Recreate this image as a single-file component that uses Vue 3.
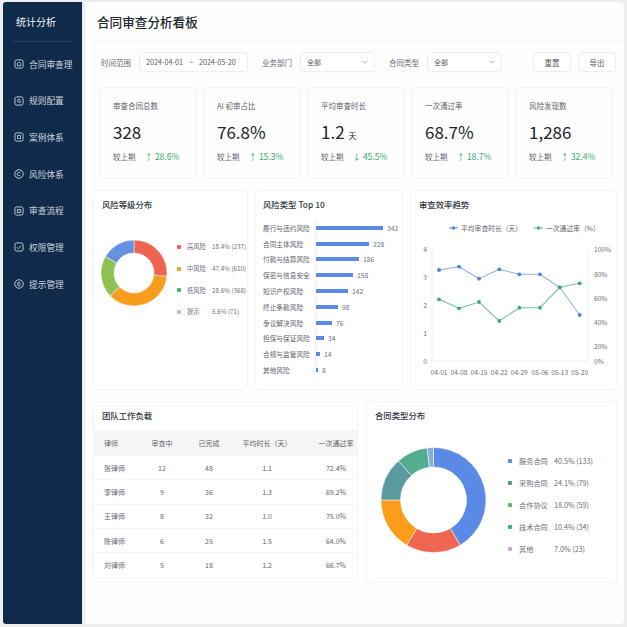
<template>
  <div class="page">
    <aside class="sidebar">
      <div class="brand">统计分析</div>
      <nav class="nav">
        <div v-for="item in navItems" :key="item.label" class="nav-item">
          <svg class="nav-icon" viewBox="0 0 11 11" fill="none" stroke="currentColor" stroke-width="1">
            <circle v-if="item.round" cx="5.5" cy="5.5" r="4.7" />
            <rect v-else x="1" y="1" width="9" height="9" rx="2" />
            <path :d="item.glyph" stroke-width="0.9" />
          </svg>
          <span>{{ item.label }}</span>
        </div>
      </nav>
    </aside>

    <main class="main">
      <h1 class="title">合同审查分析看板</h1>

      <section class="panel">
        <div class="filters">
          <span class="filter-label">时间范围</span>
          <div class="box date-box"><span>2024-04-01</span><span>~</span><span>2024-05-20</span></div>
          <span class="filter-label">业务部门</span>
          <div class="box select-box">
            <span>全部</span>
            <svg class="chevron" viewBox="0 0 8 5" fill="none" stroke="#8a8f98" stroke-width="0.9"><path d="M1 1l3 3 3-3" /></svg>
          </div>
          <span class="filter-label">合同类型</span>
          <div class="box select-box">
            <span>全部</span>
            <svg class="chevron" viewBox="0 0 8 5" fill="none" stroke="#8a8f98" stroke-width="0.9"><path d="M1 1l3 3 3-3" /></svg>
          </div>
          <button class="box btn btn-first">重置</button>
          <button class="box btn">导出</button>
        </div>

        <div class="kpis">
          <div v-for="kpi in kpis" :key="kpi.label" class="kpi">
            <div class="kpi-label">{{ kpi.label }}</div>
            <div class="kpi-value">{{ kpi.value }}<small v-if="kpi.unit">{{ kpi.unit }}</small></div>
            <div class="kpi-foot">
              <span>较上期</span>
              <span class="kpi-trend">{{ kpi.arrow }} {{ kpi.trend }}</span>
            </div>
          </div>
        </div>
      </section>

      <section class="charts">
        <div class="card risk-card">
          <h2 class="card-title">风险等级分布</h2>
          <div class="risk-body">
            <svg class="donut-small" viewBox="0 0 68 68">
              <path v-for="s in riskSlices" :key="s.color" :d="s.d" :fill="s.color" stroke="#fff" stroke-width="0.5" />
            </svg>
            <ul class="legend risk-legend">
              <li v-for="l in riskLegend" :key="l.name">
                <i class="dot" :style="{ background: l.color }"></i>
                <span class="legend-name">{{ l.name }}</span>
                <span class="legend-val">{{ l.val }}</span>
              </li>
            </ul>
          </div>
        </div>

        <div class="card bars-card">
          <h2 class="card-title">风险类型 Top 10</h2>
          <div class="bars">
            <div v-for="b in bars" :key="b.name" class="bar-row">
              <span class="bar-name">{{ b.name }}</span>
              <div class="bar-track">
                <i class="bar" :style="{ width: b.w + 'px' }"></i>
                <span class="bar-num">{{ b.num }}</span>
              </div>
            </div>
          </div>
        </div>

        <div class="card trend-card">
          <h2 class="card-title">审查效率趋势</h2>
          <svg class="trend" viewBox="0 0 207 170" width="207" height="170">
            <g class="legend-svg">
              <path d="M39 16h9" stroke="#5b8ae6" stroke-width="1.2" />
              <circle cx="43.5" cy="16" r="1.8" fill="#5b8ae6" />
              <text x="51" y="18.5">平均审查时长（天）</text>
              <path d="M124 16h9" stroke="#48ad80" stroke-width="1.2" />
              <circle cx="128.5" cy="16" r="1.8" fill="#48ad80" />
              <text x="136" y="18.5">一次通过率（%）</text>
            </g>
            <path d="M22 37V149H178V37" fill="none" stroke="#eceef1" stroke-width="0.8" />
            <g class="axis-text">
              <text v-for="t in leftTicks" :key="t.label" x="17" :y="t.y + 2.5" text-anchor="end">{{ t.label }}</text>
              <text v-for="t in rightTicks" :key="t.label" x="184" :y="t.y + 2.5">{{ t.label }}</text>
              <text v-for="(d, i) in dates" :key="d" :x="xs[i]" y="162.5" text-anchor="middle">{{ d }}</text>
            </g>
            <polyline :points="line(durations)" fill="none" stroke="#8fb0ec" stroke-width="1.1" />
            <polyline :points="line(passRates)" fill="none" stroke="#7cc4a4" stroke-width="1.1" />
            <circle v-for="(y, i) in durations" :key="'d' + i" :cx="xs[i]" :cy="y" r="1.9" fill="#4f7fe0" />
            <circle v-for="(y, i) in passRates" :key="'p' + i" :cx="xs[i]" :cy="y" r="1.9" fill="#3fa877" />
          </svg>
        </div>
      </section>

      <section class="bottom">
        <div class="card team-card">
          <h2 class="card-title">团队工作负载</h2>
          <table class="team">
            <thead>
              <tr><th>律师</th><th>审查中</th><th>已完成</th><th>平均时长（天）</th><th>一次通过率</th></tr>
            </thead>
            <tbody>
              <tr v-for="r in team" :key="r[0]">
                <td v-for="(c, i) in r" :key="i">{{ c }}</td>
              </tr>
            </tbody>
          </table>
        </div>

        <div class="card type-card">
          <h2 class="card-title">合同类型分布</h2>
          <div class="type-body">
            <svg class="donut-large" viewBox="0 0 106 114">
              <path v-for="s in typeSlices" :key="s.color" :d="s.d" :fill="s.color" stroke="#fff" stroke-width="0.5" />
            </svg>
            <ul class="legend type-legend">
              <li v-for="l in typeLegend" :key="l.name">
                <i class="dot" :style="{ background: l.color }"></i>
                <span class="legend-name">{{ l.name }}</span>
                <span class="legend-val">{{ l.val }}</span>
              </li>
            </ul>
          </div>
        </div>
      </section>
    </main>
  </div>
</template>

<script setup>
const navItems = [
  { label: '合同审查理', glyph: 'M3.7 7.5V4.8L5.5 3.4l1.8 1.4v2.7z' },
  { label: '规则配置', glyph: 'M7.6 7.6L6.7 6.7M7 5.2a1.6 1.6 0 1 1-3.2 0 1.6 1.6 0 0 1 3.2 0z' },
  { label: '案例体系', glyph: 'M3.8 3.8h3.4v3.4H3.8z' },
  { label: '风险体系', round: true, glyph: 'M7 4.2a2 2 0 1 0 0 2.6' },
  { label: '审查流程', glyph: 'M3.6 3.8h3.8v3.4H3.6zM5 5.5h1' },
  { label: '权限管理', glyph: 'M3.3 5.8l1.5 1.5 3-3.4' },
  { label: '提示管理', round: true, glyph: 'M6.8 3.6a2 2 0 0 0-2.9 2.4 1.5 1.5 0 1 0 .7-1' },
]

const kpis = [
  { label: '审查合同总数', value: '328', arrow: '↑', trend: '28.6%' },
  { label: 'AI 初审占比', value: '76.8%', arrow: '↑', trend: '15.3%' },
  { label: '平均审查时长', value: '1.2', unit: '天', arrow: '↓', trend: '45.5%' },
  { label: '一次通过率', value: '68.7%', arrow: '↑', trend: '18.7%' },
  { label: '风险发现数', value: '1,286', arrow: '↑', trend: '32.4%' },
]

// 角度从 12 点方向顺时针
function arc(cx, cy, r0, r1, a0, a1) {
  const pt = (r, a) => {
    const t = ((a - 90) * Math.PI) / 180
    return `${(cx + r * Math.cos(t)).toFixed(2)} ${(cy + r * Math.sin(t)).toFixed(2)}`
  }
  const large = a1 - a0 > 180 ? 1 : 0
  return `M${pt(r1, a0)}A${r1} ${r1} 0 ${large} 1 ${pt(r1, a1)}L${pt(r0, a1)}A${r0} ${r0} 0 ${large} 0 ${pt(r0, a0)}Z`
}

function slices(cx, cy, r0, r1, parts) {
  return parts.map(([a0, a1, color]) => ({ color, d: arc(cx, cy, r0, r1, a0, a1) }))
}

const riskSlices = slices(34, 34, 20, 33, [
  [0, 96, '#ee6352'],
  [96, 226, '#f99c1e'],
  [226, 300, '#8fc152'],
  [300, 360, '#6690e0'],
])

const riskLegend = [
  { name: '高风险', val: '18.4% (237)', color: '#ee6352' },
  { name: '中风险', val: '47.4% (610)', color: '#f99c1e' },
  { name: '低风险', val: '28.6% (368)', color: '#43b56f' },
  { name: '提示', val: '5.6% (71)', color: '#cdb2e2' },
]

const bars = [
  { name: '履行与违约风险', num: 342, w: 67 },
  { name: '合同主体风险', num: 228, w: 53 },
  { name: '付款与结算风险', num: 186, w: 43 },
  { name: '保密与信息安全', num: 158, w: 37 },
  { name: '知识产权风险', num: 142, w: 32 },
  { name: '终止条款风险', num: 98, w: 22 },
  { name: '争议解决风险', num: 76, w: 16 },
  { name: '担保与保证风险', num: 34, w: 8 },
  { name: '合规与监管风险', num: 14, w: 4 },
  { name: '其他风险', num: 8, w: 2 },
]

const dates = ['04-01', '04-08', '04-15', '04-22', '04-29', '05-06', '05-13', '05-20']
const xs = [29, 49, 69, 89.3, 109.3, 130, 149.7, 169.7]
const durations = [58, 54.7, 66.7, 57.3, 62.3, 62.3, 75.3, 103]
const passRates = [87.3, 96.3, 90, 109, 95.7, 95.7, 75.3, 71.3]
const line = (ys) => ys.map((y, i) => `${xs[i]},${y}`).join(' ')

const leftTicks = [
  { label: '4', y: 37 }, { label: '3', y: 65 }, { label: '2', y: 93 }, { label: '1', y: 121 }, { label: '0', y: 149 },
]
const rightTicks = [
  { label: '100%', y: 37 }, { label: '80%', y: 62 }, { label: '60%', y: 86 },
  { label: '40%', y: 110 }, { label: '20%', y: 134 }, { label: '0%', y: 149 },
]

const team = [
  ['张律师', 12, 48, '1.1', '72.4%'],
  ['李律师', 9, 36, '1.3', '69.2%'],
  ['王律师', 8, 32, '1.0', '75.0%'],
  ['陈律师', 6, 25, '1.5', '64.0%'],
  ['刘律师', 5, 18, '1.2', '66.7%'],
]

const typeSlices = slices(52.5, 57, 33, 52.5, [
  [0, 149.4, '#5b8ae6'],
  [149.4, 210.6, '#ef6750'],
  [210.6, 270, '#f99d1a'],
  [270, 318, '#5c9aa2'],
  [318, 353, '#52ae8e'],
  [353, 360, '#8aaed8'],
])

const typeLegend = [
  { name: '服务合同', val: '40.5% (133)', color: '#5b8ae6' },
  { name: '采购合同', val: '24.1% (79)', color: '#4f9a96' },
  { name: '合作协议', val: '18.0% (59)', color: '#62b85c' },
  { name: '技术合同', val: '10.4% (34)', color: '#3fae94' },
  { name: '其他', val: '7.0% (23)', color: '#c8a9d8' },
]
</script>

<style>
html, body {
  margin: 0;
  background: #eeeeee;
}
</style>

<style scoped>
.page {
  display: flex;
  width: 627px;
  height: 627px;
  box-sizing: border-box;
  padding: 2px 3px 3px 3px;
  font-family: "Noto Sans CJK SC", "Noto Sans", sans-serif;
  color: #3a3f47;
  overflow: hidden;
}

/* 侧边栏 */
.sidebar {
  width: 79px;
  flex: none;
  background: #0f2a4a;
  border-radius: 3px 0 0 3px;
  color: #cdd5df;
}
.brand {
  height: 39px;
  margin: 0 10px 0 10px;
  padding-left: 3px;
  line-height: 39px;
  font-size: 10px;
  color: #eef2f6;
  border-bottom: 1px solid #27405e;
}
.nav {
  display: flex;
  flex-direction: column;
  gap: 22.7px;
  padding: 15px 0 0 11px;
}
.nav-item {
  display: flex;
  align-items: center;
  gap: 5px;
  height: 14px;
  font-size: 8.7px;
}
.nav-icon {
  width: 10px;
  height: 10px;
  flex: none;
}

.main {
  flex: 1;
  background: #fefefe;
  border-radius: 0 4px 4px 0;
  margin-left: 3px;
  min-width: 0;
}
.title {
  height: 39px;
  margin: 0;
  padding-left: 12px;
  line-height: 40px;
  font-size: 12.6px;
  font-weight: 500;
  color: #23272e;
}

/* 筛选 + 指标 */
.panel {
  height: 148px;
  margin-left: 9px;
  box-sizing: border-box;
  padding-top: 10px;
  border: 1px solid #f4f5f7;
  border-width: 1px 0 0 1px;
  border-radius: 4px 0 0 0;
}
.filters {
  display: flex;
  align-items: center;
  height: 20px;
  padding-left: 6px;
  font-size: 7.5px;
}
.filter-label {
  width: 31px;
  margin-right: 7px;
  color: #666c75;
  white-space: nowrap;
}
.box {
  height: 20px;
  box-sizing: border-box;
  background: #fff;
  border: 1px solid #eceef1;
  border-radius: 3px;
  font-size: 7px;
  color: #555b64;
  display: flex;
  align-items: center;
  font-family: inherit;
}
.date-box {
  width: 109px;
  margin-right: 14px;
  padding-left: 6px;
  gap: 6px;
  font-size: 7.2px;
  white-space: nowrap;
}
.select-box {
  width: 75px;
  margin-right: 14px;
  padding: 0 6px;
  justify-content: space-between;
}
.chevron {
  width: 6px;
  height: 4px;
}
.btn {
  width: 38px;
  padding: 0;
  justify-content: center;
  margin-left: 7px;
  font-size: 7.5px;
}
.btn-first {
  margin-left: 17px;
}
.kpis {
  display: grid;
  grid-template-columns: repeat(5, 96px);
  gap: 8px;
  margin: 15px 0 0 5px;
}
.kpi {
  height: 92px;
  box-sizing: border-box;
  padding: 12px 0 0 12px;
  border: 1px solid #f1f2f4;
  border-radius: 4px;
}
.kpi-label {
  height: 12px;
  line-height: 12px;
  font-size: 7.5px;
  color: #5c626b;
}
.kpi-value {
  height: 24px;
  margin-top: 8px;
  line-height: 24px;
  font-size: 17px;
  font-weight: 400;
  color: #1f242b;
}
.kpi-value small {
  margin-left: 4px;
  font-size: 8px;
}
.kpi-foot {
  display: flex;
  gap: 9px;
  align-items: center;
  margin-top: 6px;
  height: 12px;
  font-size: 7.5px;
  color: #5c626b;
}
.kpi-trend {
  color: #3aa876;
  font-size: 8.5px;
}

/* 卡片 */
.card {
  background: #fff;
  border: 1px solid #f3f4f6;
  border-radius: 4px;
  box-sizing: border-box;
  padding: 7px 8px 0;
  overflow: hidden;
}
.card-title {
  margin: 0;
  height: 12px;
  line-height: 12px;
  font-size: 8.4px;
  font-weight: 500;
  color: #333841;
}
.charts {
  display: grid;
  grid-template-columns: 155px 148px 207px;
  gap: 7px;
  height: 200px;
  margin: 1px 0 0 8px;
}
.bottom {
  display: grid;
  grid-template-columns: 265px 251px;
  gap: 8px;
  height: 182px;
  margin: 11px 0 0 8px;
}

.risk-body {
  display: flex;
  align-items: flex-start;
  margin-top: 29px;
}
.donut-small {
  width: 68px;
  height: 68px;
  margin-left: -2px;
  flex: none;
}
.legend {
  list-style: none;
  margin: 0;
  padding: 0;
  color: #6a7078;
}
.legend li {
  display: flex;
  align-items: center;
}
.dot {
  width: 4px;
  height: 4px;
  border-radius: 1px;
  flex: none;
}
.risk-legend {
  margin: -3px 0 0 9px;
  font-size: 6.3px;
  white-space: nowrap;
}
.risk-legend li {
  height: 21.7px;
}
.risk-legend .legend-name {
  width: 25px;
  margin-left: 6px;
}
.type-legend {
  margin: 7px 0 0 21.5px;
  font-size: 7.2px;
  white-space: nowrap;
}
.type-legend li {
  height: 22px;
}
.type-legend .legend-name {
  width: 35px;
  margin-left: 7px;
}

.bars-card {
  padding-left: 7px;
}
.bars {
  margin-top: 10px;
}
.bar-row {
  display: flex;
  align-items: center;
  height: 15.8px;
}
.bar-name {
  width: 52px;
  flex: none;
  font-size: 6.7px;
  color: #5f656d;
  white-space: nowrap;
}
.bar-track {
  display: flex;
  align-items: center;
  height: 100%;
  gap: 4px;
  border-left: 1px solid #eef0f3;
  font-size: 6.8px;
  color: #6a7078;
}
.bar {
  height: 4px;
  background: #5b8ae6;
}

.trend-card {
  padding: 7px 0 0;
}
.trend-card .card-title {
  margin-left: 8px;
}
.trend {
  display: block;
  margin-top: 2px;
  margin-left: -1px;
}
.legend-svg text {
  font-size: 6.8px;
  fill: #5f656d;
}
.axis-text text {
  font-size: 6.6px;
  fill: #6a7078;
}

/* 团队表格 */
.team-card {
  padding: 7px 0 0;
}
.team-card .card-title {
  margin-left: 8px;
}
.team {
  width: 265px;
  table-layout: fixed;
  margin: 9px 0 0 -1px;
  border-collapse: collapse;
  font-size: 7px;
  color: #5f656d;
}
.team th {
  height: 26px;
  padding: 0;
  background: #f4f5f7;
  font-weight: 400;
  text-align: center;
}
.team td {
  height: 23.3px;
  padding: 0;
  text-align: center;
  border-bottom: 1px solid #f6f7f8;
}
.team tr:last-child td {
  border-bottom: 0;
}
.team th:nth-child(1), .team td:nth-child(1) { width: 46px; text-align: left; padding-left: 11px; box-sizing: border-box; }
.team th:nth-child(2), .team td:nth-child(2) { width: 46px; }
.team th:nth-child(3), .team td:nth-child(3) { width: 48px; }
.team th:nth-child(4), .team td:nth-child(4) { width: 68px; }
.team th:nth-child(5), .team td:nth-child(5) { padding-left: 13px; box-sizing: border-box; white-space: nowrap; }

.type-body {
  display: flex;
  align-items: flex-start;
  margin-top: 22px;
}
.donut-large {
  width: 106px;
  height: 114px;
  margin-left: 5.5px;
  flex: none;
}
</style>
